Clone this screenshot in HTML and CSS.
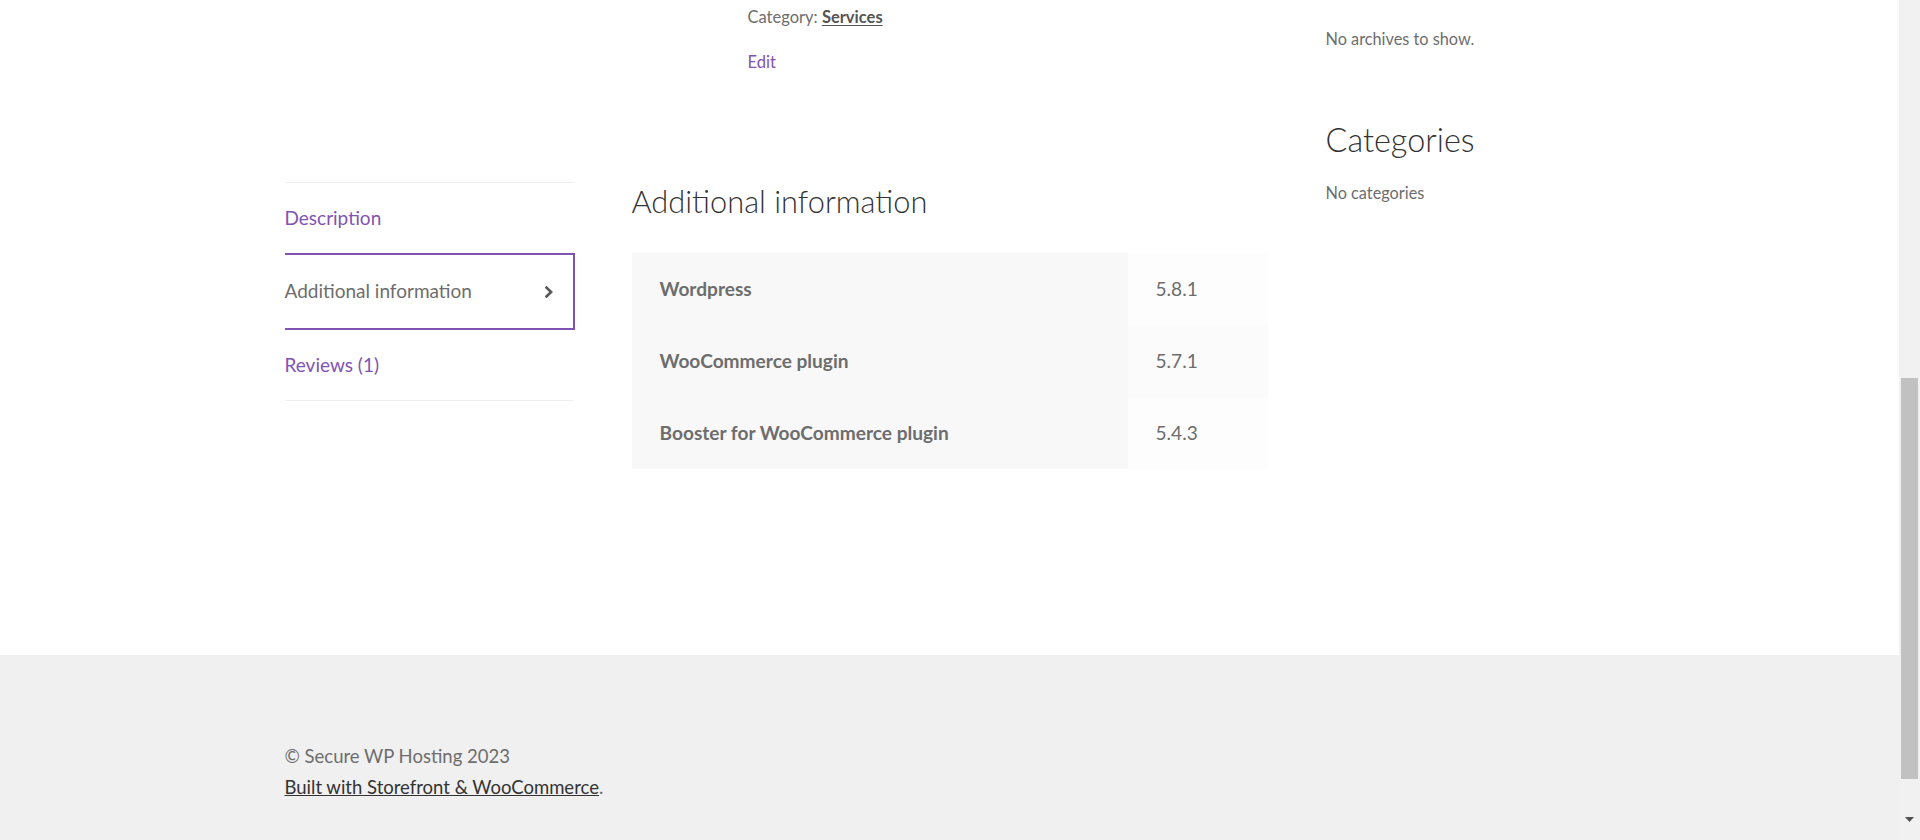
FILE: index.html
```html
<!DOCTYPE html>
<html lang="en">
<head>
<meta charset="utf-8">
<title>Product - Secure WP Hosting</title>
<link rel="stylesheet" href="styles.css">
</head>
<body>
<div class="page">
  <div class="site-content">
    <div class="col-full">
      <main class="primary">
        <div class="summary">
          <div class="product-meta">Category: <a class="meta-link" href="#">Services</a></div>
          <div class="edit-line"><a class="edit-link" href="#">Edit</a></div>
        </div>
        <div class="tabs-wrap">
          <ul class="tabs">
            <li class="tab tab-plain"><a class="tab-link" href="#">Description</a></li>
            <li class="tab tab-active">
              <span class="tab-active-text">Additional information</span>
              <svg class="chevron" width="8" height="12" viewBox="0 0 8 12" aria-hidden="true"><path d="M1.6 1.6 L6.1 6 L1.6 10.4" fill="none" stroke="#5a5a5a" stroke-width="2.7" stroke-linecap="square" stroke-linejoin="miter"/></svg>
            </li>
            <li class="tab tab-plain tab-last"><a class="tab-link" href="#">Reviews (1)</a></li>
          </ul>
          <div class="panel">
            <h2 class="panel-title">Additional information</h2>
            <table class="attrs">
              <colgroup><col class="col-label"><col class="col-value"></colgroup>
              <tbody>
                <tr><th class="attr-label">Wordpress</th><td class="attr-value">5.8.1</td></tr>
                <tr><th class="attr-label">WooCommerce plugin</th><td class="attr-value">5.7.1</td></tr>
                <tr><th class="attr-label">Booster for WooCommerce plugin</th><td class="attr-value">5.4.3</td></tr>
              </tbody>
            </table>
          </div>
        </div>
      </main>
      <aside class="sidebar">
        <p class="widget-text">No archives to show.</p>
        <h2 class="widget-title">Categories</h2>
        <p class="widget-text widget-text-after">No categories</p>
      </aside>
    </div>
  </div>
  <footer class="site-footer">
    <div class="footer-inner">
      <div class="site-info-line">© Secure WP Hosting 2023</div>
      <div class="site-info-line"><a class="footer-link" href="#">Built with Storefront &amp; WooCommerce</a>.</div>
    </div>
  </footer>
</div>
<div class="scrollbar" aria-hidden="true">
  <div class="scroll-thumb"></div>
  <svg class="scroll-arrow" width="9" height="5" viewBox="0 0 9 5"><path d="M0 0 H9 L4.5 5 Z" fill="#505050"/></svg>
</div>
</body>
</html>
```
FILE: styles.css
```css
html, body {
  margin: 0;
  padding: 0;
}
body {
  font-family: Lato, "Liberation Sans", sans-serif;
  color: #6d6d6d;
  background: #ffffff;
  width: 1899px;
  height: 840px;
  overflow: hidden;
}
a {
  text-decoration: none;
}
.site-content {
  height: 655px;
}
.col-full {
  width: 1330px;
  margin: 0 auto;
  display: flex;
  justify-content: space-between;
}
.primary {
  width: 983px;
}
.summary {
  width: 520px;
  margin-left: auto;
  padding-top: 3px;
}
.product-meta,
.edit-line {
  font-size: 16.5px;
  line-height: 28px;
}
.edit-line {
  margin-top: 17px;
}
.meta-link {
  color: #555555;
  font-weight: 700;
  text-decoration: underline;
  text-underline-offset: 2px;
}
.edit-link {
  color: #7f54b3;
}
.tabs-wrap {
  margin-top: 106px;
  display: flex;
  justify-content: space-between;
  align-items: flex-start;
}
.tabs {
  list-style: none;
  margin: 0;
  padding: 0;
  width: 289px;
  border-top: 1px solid #eeeeee;
}
.tab {
  font-size: 19px;
}
.tab-plain {
  height: 70px;
  line-height: 70px;
}
.tab-link {
  color: #7f54b3;
}
.tab-last {
  border-bottom: 1px solid #eeeeee;
}
.tab-active {
  height: 72px;
  padding-bottom: 1px;
  line-height: 72px;
  border: 2px solid #7f54b3;
  border-left: none;
  margin-right: -1px;
  padding-right: 20px;
  display: flex;
  justify-content: space-between;
  align-items: center;
  color: #6d6d6d;
}
.chevron {
  display: block;
  margin-top: 1px;
}
.panel {
  width: 636px;
}
.panel-title {
  margin: 0;
  font-size: 30.8px;
  line-height: 39px;
  font-weight: 300;
  color: #333333;
}
.attrs {
  margin-top: 32px;
  width: 636px;
  border-collapse: collapse;
  border-spacing: 0;
  table-layout: fixed;
}
.col-label {
  width: 496px;
}
.col-value {
  width: 140px;
}
.attr-label,
.attr-value {
  height: 71px;
  padding: 0 28px 1px;
  text-align: left;
  vertical-align: middle;
  font-size: 19.1px;
  line-height: 30px;
  color: #6d6d6d;
}
.attr-label {
  background: #f8f8f8;
  font-weight: 700;
}
.attr-value {
  background: #fdfdfd;
}
.attrs tr:nth-child(2n) .attr-value {
  background: #fbfbfb;
}
.sidebar {
  width: 289px;
  padding-top: 25px;
}
.widget-text {
  margin: 0;
  font-size: 16.3px;
  line-height: 28px;
}
.widget-title {
  margin: 67px 0 0;
  font-size: 32.4px;
  line-height: 40px;
  font-weight: 300;
  color: #333333;
}
.widget-text-after {
  margin-top: 19px;
}
.site-footer {
  background: #f0f0f0;
  height: 185px;
  box-sizing: border-box;
  padding-top: 86px;
}
.footer-inner {
  width: 1330px;
  margin: 0 auto;
}
.site-info-line {
  font-size: 18.5px;
  line-height: 31px;
}
.footer-link {
  color: #333333;
  text-decoration: underline;
}
.scrollbar {
  position: fixed;
  top: 0;
  right: 0;
  width: 21px;
  height: 840px;
  background: #f1f1f1;
}
.scroll-thumb {
  position: absolute;
  left: 2px;
  top: 378px;
  width: 17px;
  height: 401px;
  background: #c1c1c1;
}
.scroll-arrow {
  position: absolute;
  left: 6px;
  top: 817px;
}
```
